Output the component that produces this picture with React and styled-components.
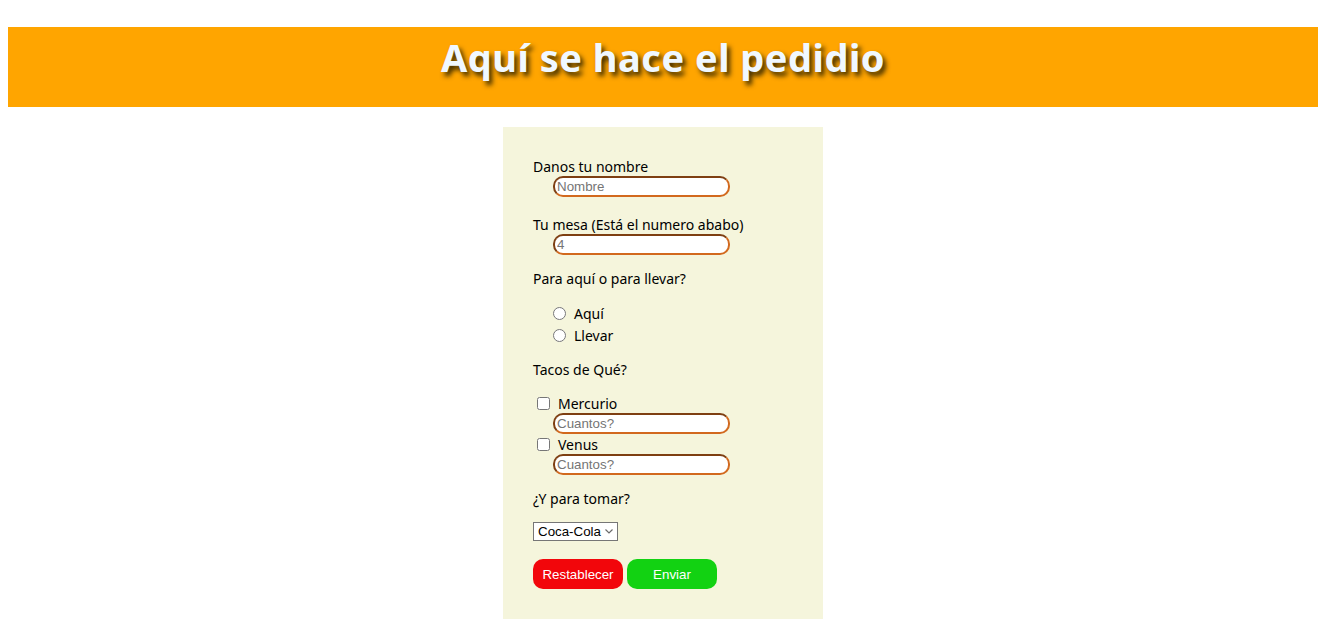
import styled, { createGlobalStyle } from "styled-components";

const GlobalStyle = createGlobalStyle`
  body {
    margin: 8px;
    background: #fff;
    font-family: "Comic Sans MS", "Noto Sans", sans-serif;
  }
`;

const Header = styled.header`
  margin-top: 19px;
  height: 80px;
  background: #ffa500;
  display: flex;
  justify-content: center;
  align-items: center;
`;

const Title = styled.h1`
  margin: 0 0 20px;
  font-size: 38px;
  font-weight: bold;
  color: #f0f8ff;
  letter-spacing: 0.5px;
  text-shadow: 3px 4px 5px #3a2a00;
`;

const Main = styled.main`
  display: flex;
  justify-content: center;
  padding-top: 20px;
`;

const Form = styled.form`
  width: 320px;
  box-sizing: border-box;
  background: #f5f5dc;
  padding: 30px;
  display: flex;
  flex-direction: column;
  align-items: flex-start;
  font-size: 14px;
  color: #000;
`;

const Label = styled.label`
  display: block;
  line-height: 19px;
  margin-top: ${(p) => p.$top || 0}px;
`;

const TextInput = styled.input`
  box-sizing: border-box;
  width: 177px;
  height: 21px;
  margin: 0 0 0 20px;
  padding: 1px 2px;
  border: 2px inset #d2691e;
  border-radius: 10px;
  background: #fff;
  font-family: "Liberation Sans", Arial, sans-serif;
  font-size: 13.33px;
  outline: none;
  &::placeholder {
    color: #757575;
  }
`;

const OptionRow = styled.label`
  display: flex;
  align-items: center;
  height: ${(p) => p.$h || 22}px;
  margin-top: ${(p) => p.$top || 0}px;
  padding-left: ${(p) => p.$indent || 0}px;
  input {
    width: 13px;
    height: 13px;
    margin: 0 8px 0 0;
  }
`;

const SelectWrap = styled.div`
  position: relative;
  margin-top: 14px;
  svg {
    position: absolute;
    right: 5px;
    top: 7px;
    pointer-events: none;
  }
`;

const Select = styled.select`
  display: block;
  appearance: none;
  width: 85px;
  height: 19px;
  border: 1px solid #767676;
  border-radius: 0;
  background: #fff;
  color: #000;
  font-family: "Liberation Sans", Arial, sans-serif;
  font-size: 13.33px;
  padding: 0 0 0 4px;
`;

const Buttons = styled.div`
  display: flex;
  gap: 4px;
  margin-top: 18px;
`;

const Button = styled.button`
  width: 90px;
  height: 30px;
  border: none;
  border-radius: 10px;
  background: ${(p) => p.$bg};
  color: #fff;
  font-family: "Liberation Sans", Arial, sans-serif;
  font-size: 13.33px;
  cursor: pointer;
`;

export default function App() {
  return (
    <>
      <GlobalStyle />
      <Header>
        <Title>Aquí se hace el pedidio</Title>
      </Header>
      <Main>
        <Form onSubmit={(e) => e.preventDefault()}>
          <Label>Danos tu nombre</Label>
          <TextInput type="text" placeholder="Nombre" />

          <Label $top={18}>Tu mesa (Está el numero ababo)</Label>
          <TextInput type="number" placeholder="4" />

          <Label $top={14}>Para aquí o para llevar?</Label>
          <OptionRow $top={14} $indent={20}>
            <input type="radio" name="lugar" />
            Aquí
          </OptionRow>
          <OptionRow $indent={20}>
            <input type="radio" name="lugar" />
            Llevar
          </OptionRow>

          <Label $top={14}>Tacos de Qué?</Label>
          <OptionRow $top={14} $indent={4} $h={20}>
            <input type="checkbox" />
            Mercurio
          </OptionRow>
          <TextInput type="number" placeholder="Cuantos?" />
          <OptionRow $indent={4} $h={20}>
            <input type="checkbox" />
            Venus
          </OptionRow>
          <TextInput type="number" placeholder="Cuantos?" />

          <Label $top={14}>¿Y para tomar?</Label>
          <SelectWrap>
            <Select defaultValue="coca">
              <option value="coca">Coca-Cola</option>
              <option value="agua">Agua</option>
            </Select>
            <svg width="8" height="5" viewBox="0 0 8 5">
              <path d="M0.5 0.5 L4 4 L7.5 0.5" fill="none" stroke="#6b6b6b" strokeWidth="1.2" />
            </svg>
          </SelectWrap>

          <Buttons>
            <Button type="reset" $bg="#f2060b">Restablecer</Button>
            <Button type="submit" $bg="#12d212">Enviar</Button>
          </Buttons>
        </Form>
      </Main>
    </>
  );
}
